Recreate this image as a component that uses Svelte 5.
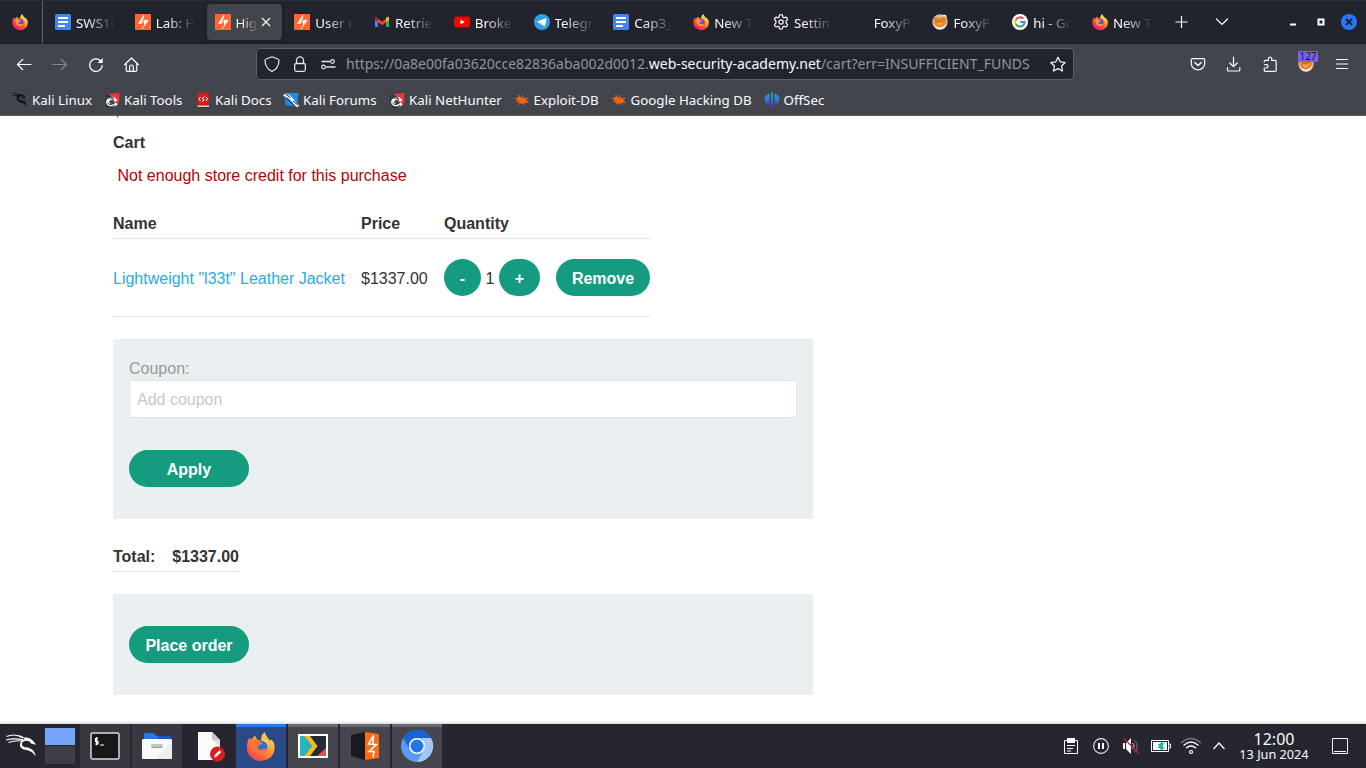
<script>
  const tabs = [
    { icon: 'docs', title: 'SWS10' },
    { icon: 'burp', title: 'Lab: H' },
    { icon: 'burp', title: 'High', active: true },
    { icon: 'burp', title: 'User r' },
    { icon: 'gmail', title: 'Retrie' },
    { icon: 'youtube', title: 'Broke' },
    { icon: 'telegram', title: 'Telegr' },
    { icon: 'docs', title: 'Cap3_' },
    { icon: 'firefox', title: 'New T' },
    { icon: 'gear', title: 'Settin' },
    { icon: 'none', title: 'FoxyP' },
    { icon: 'foxy', title: 'FoxyP' },
    { icon: 'google', title: 'hi - Go' },
    { icon: 'firefox', title: 'New T' }
  ];
  const bookmarks = [
    { icon: 'kali', title: 'Kali Linux', w: 92 },
    { icon: 'tools', title: 'Kali Tools', w: 91 },
    { icon: 'book', title: 'Kali Docs', w: 88 },
    { icon: 'forums', title: 'Kali Forums', w: 106 },
    { icon: 'tools', title: 'Kali NetHunter', w: 124.5 },
    { icon: 'bug', title: 'Exploit-DB', w: 97 },
    { icon: 'bug', title: 'Google Hacking DB', w: 153 },
    { icon: 'offsec', title: 'OffSec', w: 80 }
  ];
  const tasks = [
    { icon: 'terminal', kind: 'pinned' },
    { icon: 'files', kind: 'pinned' },
    { icon: 'editor', kind: 'plain' },
    { icon: 'firefoxBig', kind: 'focused' },
    { icon: 'arrowApp', kind: 'open' },
    { icon: 'burpBig', kind: 'open' },
    { icon: 'chromium', kind: 'open' }
  ];
  const tray = ['clipboard', 'pause', 'volume', 'battery', 'wifi', 'up'];
</script>

{#snippet glyph(name, size = 16)}
  <svg class="glyph" width={size} height={size} viewBox="0 0 {size > 20 ? 32 : 16} {size > 20 ? 32 : 16}" fill="none" aria-hidden="true">
    {#if name === 'firefox'}
      <defs>
        <linearGradient id="ffs" x1="13" y1="1" x2="3" y2="15" gradientUnits="userSpaceOnUse"><stop stop-color="#fff44f" /><stop offset=".35" stop-color="#ffa52a" /><stop offset=".65" stop-color="#ff4a3e" /><stop offset="1" stop-color="#ee1b70" /></linearGradient>
      </defs>
      <path d="M2 3.5 2.6 5 4.6 3.3 5 2.5 6.1 4.3 8 4.8C8 2.6 9.2 1 10.4.1c.1 1.7 1.3 2.4 2.6 3.8l.4-.2c1.6 1.3 2.5 3.1 2.5 5A7.7 7.3 0 0 1 .3 8.8C.2 6.6 1 4.8 2 3.5z" fill="url(#ffs)" />
      <circle cx="8" cy="8.5" r="3.7" fill="#7543e5" />
      <path d="M3.5 5.7c1.6-.7 3.1-.5 4.3.1l1.4 1.3-2.2.8c-1 .4-.8 2 .7 2.2 1.7.3 2.700-.8 3.800-.3-1 2.200-3 3-4.900 2.300-2-.7-3.700-3.800-3.100-6.400z" fill="#ff9a2a" />
    {:else if name === 'docs'}
      <rect width="16" height="16" rx="1.5" fill="#4285f4" />
      <path d="M3 4h10M3 8h10M3 12h7" stroke="#fff" stroke-width="2" />
    {:else if name === 'burp'}
      <rect width="16" height="16" fill="#ff6633" />
      <path d="M9 1v5.200h4.200L7 15V9.800H2.800z" fill="#fff" />
      <path d="M9 3.500V8H6.800zM7 8h2v4L7 15z" fill="#ff6633" />
      <path d="M9 1 5.500 8H9V6.200h4.200L7 15" fill="none" stroke="#fff" stroke-width=".7" />
    {:else if name === 'gmail'}
      <path d="M1 3.500V13h3V6z" fill="#4285f4" /><path d="M12 6v7h3V3.500z" fill="#34a853" />
      <path d="M1 3.700v2.200l3 2.400V4.800L2.800 3.200z" fill="#c5221f" /><path d="m4 4.700 4 3 4-3v3.600l-4 3-4-3z" fill="#ea4335" />
      <path d="M12 4.800v3.500l3-2.400V4.200c0-1.500-1.500-1.900-2.400-1z" fill="#fbbc04" />
    {:else if name === 'youtube'}
      <rect y="2.500" width="16" height="11" rx="3" fill="#f00" /><path d="m6.400 5.500 4.300 2.500-4.300 2.500z" fill="#fff" />
    {:else if name === 'telegram'}
      <circle cx="8" cy="8" r="8" fill="#329fe3" /><path d="m2.900 7.800 8.900-3.600c.6-.2.800.1.700.7L11 11.700c-.1.500-.5.600-.9.400L5.700 9.200z" fill="#fff" /><path d="m6.200 9.100 4.200-3.500-3.200 4-.3 1.800z" fill="#b5d9ee" />
    {:else if name === 'gear'}
      <path d="M6.500 1.100Q8 .2 9.500 1.100l.3 1.900 1.300.8 1.800-.7q1.400.5 1.700 2.300l-1.500 1.500v2.200l1.500 1.500q-.4 1.800-1.900 2.400l-1.700-.8-1.300.8-.2 1.800q-1.500.8-3 0l-.3-1.800-1.300-.8-1.700.8Q1.700 12.500 1.400 10.600l1.500-1.500V6.900L1.400 5.400Q1.700 3.600 3.200 3.100l1.700.7L6.200 3z" stroke="#fbfbfe" stroke-width="1.200" stroke-linejoin="round" />
      <circle cx="8" cy="8" r="2.200" stroke="#fbfbfe" stroke-width="1.200" />
    {:else if name === 'foxy'}
      <circle cx="8" cy="8" r="7.700" fill="#d9b896" /><path d="M2 4 4.500 3l3 1.200L13.500 2l.6 4.500c0 4-2.600 6.700-6.600 6.700C3.700 13 1.500 10 2 4z" fill="#ef8322" />
      <path d="M9.500 1 14 .8l1.200 5-1.700-2.600zM1 9.500l3 3 3.500 1.300 4-1.300 3-3-1.700 4-3.800 2-4.200-.6z" fill="#f3eee7" /><path d="M4 6.500 7 8l4.500-2.500M6 10.500l3.500-.8" stroke="#a45d28" stroke-width=".9" /><path d="m5 8 3 1.300L11 8l-2 3.300H6z" fill="#f9ae55" />
    {:else if name === 'google'}
      <circle cx="8" cy="8" r="8" fill="#fff" />
      <path d="M11.300 4.700A4.700 4.700 0 0 0 3.900 5.700" stroke="#ea4335" stroke-width="2" /><path d="M3.900 5.600a4.700 4.700 0 0 0 0 4.800" stroke="#fbbc05" stroke-width="2" /><path d="M3.900 10.300a4.700 4.700 0 0 0 7.300 1" stroke="#34a853" stroke-width="2" /><path d="M8.200 8h4.400c0 1.500-.5 2.600-1.500 3.500" stroke="#4285f4" stroke-width="2" />
    {:else if name === 'close'}
      <path d="m4 4 8 8M12 4l-8 8" stroke="#fbfbfe" stroke-width="1.100" />
    {:else if name === 'plus'}
      <path d="M7.500 2v12M1.500 8h12" stroke="#fbfbfe" stroke-width="1.200" />
    {:else if name === 'chevron'}
      <path d="m2.500 5 5.500 5.500L13.500 5" stroke="#fbfbfe" stroke-width="1.200" stroke-linecap="round" />
    {:else if name === 'min'}
      <path d="M5 10.500h6" stroke="#fff" stroke-width="2" />
    {:else if name === 'max'}
      <path d="M5.500 5.500h5v5h-5z" stroke="#fff" stroke-width="2" />
    {:else if name === 'winclose'}
      <circle cx="8" cy="8" r="8" fill="#2777ff" /><path d="m5 5 6 6m0-6-6 6" stroke="#20232c" stroke-width="2" />
    {:else if name === 'back'}
      <path d="M15 8.500H1.500m5.300-5.200L1.500 8.500l5.300 5.200" stroke="#fbfbfe" stroke-width="1.200" stroke-linecap="round" stroke-linejoin="round" />
    {:else if name === 'forward'}
      <path d="M1 8.500h13.500M9.200 3.300l5.300 5.200-5.300 5.200" stroke="#85868c" stroke-width="1.200" stroke-linecap="round" stroke-linejoin="round" />
    {:else if name === 'reload'}
      <path d="M14.200 9.700A6.300 6.300 0 1 1 12.700 5" stroke="#fbfbfe" stroke-width="1.300" stroke-linecap="round" /><path d="M14.700 2v5H9.700z" fill="#fbfbfe" />
    {:else if name === 'home'}
      <path d="m.500 8.700 7-6.700 7 6.700M2.200 7.500v6.700c0 .7.500 1.200 1.200 1.200h8.200c.7 0 1.200-.5 1.200-1.200V7.500M5.700 15.200v-4.500c0-1 .6-1.700 1.800-1.700s1.800.7 1.800 1.700v4.500" stroke="#fbfbfe" stroke-width="1.200" stroke-linecap="round" stroke-linejoin="round" />
    {:else if name === 'shield'}
      <path d="M8 .800 14 3c.7.200 1 .700 1 1.300-.1 4.700-1.700 8.900-7 11.100C2.700 13.200 1.100 9 1 4.300c0-.6.300-1.100 1-1.300z" stroke="#e3e3e8" stroke-width="1.200" stroke-linejoin="round" />
    {:else if name === 'lock'}
      <path d="M4.500 7.500V4.400a3.500 3.500 0 0 1 7 0v3.100" stroke="#e3e3e8" stroke-width="1.300" /><rect x="2.700" y="7.500" width="10.600" height="7.800" rx="1.500" stroke="#e3e3e8" stroke-width="1.300" />
    {:else if name === 'perm'}
      <path d="M2 5.500h8M6.500 11H15" stroke="#e3e3e8" stroke-width="1.400" stroke-linecap="round" /><circle cx="12.500" cy="5.500" r="1.800" stroke="#e3e3e8" stroke-width="1.200" /><circle cx="3.500" cy="11" r="1.800" stroke="#e3e3e8" stroke-width="1.200" />
    {:else if name === 'star'}
      <path d="m8 1.200 2.200 4.600 5 .7-3.600 3.500.9 5L8 12.600 3.500 15l.9-5L.800 6.500l5-.7z" stroke="#fbfbfe" stroke-width="1.200" stroke-linejoin="round" />
    {:else if name === 'pocket'}
      <path d="M2.500 2.600h11c.700 0 1.200.500 1.200 1.200v3.700a6.700 6.300 0 0 1-13.400 0V3.800c0-.7.500-1.200 1.200-1.200z" stroke="#fbfbfe" stroke-width="1.200" /><path d="M4.800 6.500 8 9.600l3.200-3.100" stroke="#fbfbfe" stroke-width="1.400" stroke-linecap="round" stroke-linejoin="round" />
    {:else if name === 'download'}
      <path d="M7.500 1v9.500M3.800 7l3.700 3.600L11.200 7M1.500 11.500V14c0 .6.400 1 1 1h10.300c.6 0 1-.4 1-1v-2.500" stroke="#fbfbfe" stroke-width="1.200" stroke-linecap="round" stroke-linejoin="round" />
    {:else if name === 'puzzle'}
      <path d="M2.200 6.200V5.400c0-.7.500-1 1.100-1h3.100V2.900c0-2.300 3.300-2.300 3.300 0v1.500h3.500c.7 0 1 .4 1 1v8.900c0 .7-.3 1-1 1H3.300c-.7 0-1.100-.4-1.100-1V12h2.200c2.200 0 2.200-3.400 0-3.400H2.200" stroke="#fbfbfe" stroke-width="1.200" stroke-linejoin="round" />
    {:else if name === 'menu'}
      <path d="M2 3.500h12M2 8h12M2 12.500h12" stroke="#fbfbfe" stroke-width="1.100" />
    {:else if name === 'kali'}
      <path d="M.5 1.200c2.800 0 5 .5 6.800 1.300M.5 3.700c2.500-.5 4.700-.2 6.500.5M3 6.500c1-.8 2.500-1 4-.7" stroke="#101216" stroke-width=".9" /><path d="M6 2.500c3-.8 5-.2 7 1.800l1 1.200-2.200-.3L9.500 4C6.800 4 6 5 6.700 6.700 8.300 8.300 11 8 12.700 9.500c1.500 1.300 2 3 2.200 5.500-1-2.300-2.500-3.300-4.600-4-3-.7-5-1.600-5.400-3.800C4.500 5.500 5 3.500 6 2.500z" fill="#101216" /><path d="M7 4.500c2 1 5 1 6.500 3.200" stroke="#101216" />
    {:else if name === 'tools'}
      <path d="M5 2 15.300 1v9.500l-3 3z" fill="#f3353a" /><path d="M12.300 9.200C10.800 7 8.800 6 6.700 6.500 3 7.500 2.700 11 5.500 12.700c2.600 1.500 5.500.5 7.300-1.200" stroke="#f5f5f5" stroke-width="3" /><path d="M1.500 4c3-.3 5.500.4 8 2.400M1 9.500c1.500-4 5.500-5 9-1.500M1.500 13.700c3.300 2.300 7.500 1.500 9.500-.7M3.700 10.700C5 13 7.500 13 9.500 11.500" stroke="#17191e" stroke-width=".9" />
    {:else if name === 'book'}
      <path d="M2.500 1 14 .5V13H2.500z" fill="#da1919" /><path d="M2 1v13h12v2H1.800z" fill="#7d1115" /><path d="M2.500 13.500H14v1.500H2.500z" fill="#d7d6d6" /><path d="M5.500 5 3.800 7l1.700 2M11 5l1.700 2L11 9M9.500 4.500 7 6.700l2.300 1L7 10" stroke="#fff" />
    {:else if name === 'forums'}
      <path d="M1 1h14.500L14 14.500 2.500 13z" fill="#238af0" /><path d="M.8 2.500c4 1 6.700 2.800 8.500 5.500s3.500 4.500 6 6.200" stroke="#fff" stroke-width="3" /><path d="m1 1 6.500 4.500M3 6.500l8 6.500M10 9l5 4" stroke="#14202c" />
    {:else if name === 'bug'}
      <path d="M3 5.500c1.700-1.300 3.700-.8 5 .2 2.700-.3 5 1.500 5.300 3.500-.5 2-4 2.800-6.800 2C4.500 10.500 2.300 8 3 5.500z" fill="#ef6511" /><path d="M.5 6.800 4 7M4.500 3 7 6.500M8.500 3l.8 3.500M2 10l3.500-1M4.500 12.500 7 10.500M9.500 13l-.5-2.500M11.500 6.300l2.700.2M12.500 9.500l2 1.500" stroke="#ef6511" stroke-width="1.100" />
    {:else if name === 'offsec'}
      <defs><linearGradient id="os" x1="0" x2="0" y1="0" y2="1"><stop stop-color="#1fa2bf" /><stop offset=".5" stop-color="#347bd5" /><stop offset="1" stop-color="#5927b8" /></linearGradient></defs>
      <path d="M5.500 1.200v12.600C-1.300 10.500-1.200 4.300 5.500 1.200zM10.500 1.200v12.600c6.800-3.300 6.700-9.500 0-12.600z" fill="url(#os)" /><path d="M7 .5h2v15H7z" fill="url(#os)" />
    {:else if name === 'terminal'}
      <rect x="2" y="3" width="28" height="26" rx="1.500" fill="#171819" stroke="#d8d8d8" stroke-width="1.500" />
      <path d="M9 8.500H6.500v2.800H9V14H6M7.700 7v8.300M11 15h4" stroke="#fff" stroke-width="1.200" />
    {:else if name === 'files'}
      <path d="M3 4.500C3 3.500 4 3 5 3h7c1.700 0 2.500 3 4 3h12c1 0 1.500.5 1.500 1.500V14H3z" fill="#2d73ed" /><path d="M16.500 6H28c1 0 1.500.5 1.500 1.500V10H18z" fill="#1a55c7" /><path d="M1 10.500C1 9.500 1.500 9 2.500 9h27c1 0 1.500.5 1.500 1.500v17c0 1-.5 1.500-1.500 1.500h-27C1.500 29 1 28.500 1 27.500z" fill="#fafafa" /><path d="m31 12-16 17h14.500c1 0 1.500-.5 1.500-1.500z" fill="#ededed" /><rect x="10" y="14" width="12" height="4" rx="1.500" fill="#c5c5c5" /><path d="M11 17.500h10" stroke="#999" />
    {:else if name === 'editor'}
      <path d="M5 2h14l8 8v20H5z" fill="#fbfbfb" /><path d="M19 2v8h8z" fill="#c9c9ca" /><path d="m20 10 7 7v-7z" fill="#e0e0e1" /><circle cx="24.500" cy="24" r="7.500" fill="#d61e20" /><path d="m21 27.500.7-2.500 4.800-4.800 1.800 1.800-4.800 4.800z" fill="#fff" />
    {:else if name === 'firefoxBig'}
      <defs><linearGradient id="ffb" x1="27" y1="3" x2="6" y2="29" gradientUnits="userSpaceOnUse"><stop stop-color="#ffe565" /><stop offset=".35" stop-color="#ffad38" /><stop offset=".72" stop-color="#ff663a" /><stop offset="1" stop-color="#e44452" /></linearGradient></defs>
      <path d="M4.500 7.500 5.300 10 8 7.500l2-2.200 2 4.200 4 1.200C16.200 6 17.300 3.800 20 2c.2 3.700 2.800 5.800 5 8.500l1.600-.8c3 3 3.300 6 2.800 10A13.500 12.500 0 0 1 2 17c-.1-3.800.8-6.800 2.500-9.500z" fill="url(#ffb)" /><circle cx="16" cy="17" r="6.500" fill="#2973dd" /><path d="M5 10.500c3.700-1.600 6-.9 8.300-.3l4 2.800c-.9 2.300-5.500 2.200-4.800 4.500.5 1.800 3.600 3 6 1.500 1.300-.8 3-.7 3.500 0-1.500 3.700-5.500 5.700-9.700 4.300C7.500 21.800 3.500 16.500 5 10.500z" fill="#f9763a" /><path d="M16 10.500c5.300.5 8 3.500 7.200 8.500C25 14 23 10 19 8z" fill="#ffd15d" />
    {:else if name === 'arrowApp'}
      <rect x="2" y="5" width="28" height="22" fill="#252b36" stroke="#fff" stroke-width="2" /><path d="M3 6h4l8 10-8 10H3z" fill="#21b8c1" /><path d="M7 6h6l7.500 10L13 26H7l8-10z" fill="#f5ba2b" /><path d="m29 18-9 8h9z" fill="#f04949" />
    {:else if name === 'burpBig'}
      <path d="M2 5 16 2v28L2 26z" fill="#181a1f" /><path d="M16 2 30 4v24l-14 2z" fill="#ff6b0e" /><path d="M24.500 5.500 19.500 14l8 .5-7.500 7h5L24 27.500M24.500 5.500 24 14" stroke="#fff" stroke-width="1.600" />
    {:else if name === 'chromium'}
      <circle cx="16" cy="16" r="16" fill="#5b9af3" /><path d="M2 8a16 16 0 0 1 28 0H16a8 8 0 0 0-7.500 11z" fill="#1764d0" /><path d="M30 8a16 16 0 0 1-14 24l7-12c2-4 0-9-3-12z" fill="#a7c6f8" /><circle cx="16" cy="16" r="8" fill="#fff" /><circle cx="16" cy="16" r="6.500" fill="#2376e9" />
    {:else if name === 'clipboard'}
      <path d="M1.500 2.500h13v13h-13z" stroke="#fff" /><path d="M4 0h8v5H4z" fill="#fff" /><path d="M4 7.500h8M4 10.500h6M4 13h4" stroke="#fff" />
    {:else if name === 'pause'}
      <circle cx="8" cy="8" r="7.400" stroke="#e8e8ea" stroke-width="1.100" /><path d="M6 5v6M10 5v6" stroke="#fff" stroke-width="2" />
    {:else if name === 'volume'}
      <path d="M0 5h2v6H0zM3 5l5-5v16l-5-5z" fill="#fff" /><path d="M9.500 5c2 1.800 2 4.200 0 6" stroke="#ddd" /><path d="M11 2c4 2.500 4 9.500 0 12" stroke="#777980" /><path d="m1 .5 15 15" stroke="#d41b25" stroke-width="1.200" />
    {:else if name === 'up'}
      <path d="m2.500 11 5.500-6 5.500 6" stroke="#fff" stroke-width="1.200" />
    {/if}
  </svg>
{/snippet}

<div class="screen">
  <header class="tabstrip">
    <div class="pinned">{@render glyph('firefox')}</div>
    <div class="tabs">
      {#each tabs as tab}
        <div class="tab" class:active={tab.active}>
          {@render glyph(tab.icon)}
          <span class="title">{tab.title}</span>
          {#if tab.active}{@render glyph('close')}{/if}
        </div>
      {/each}
    </div>
    <div class="strip-actions">{@render glyph('plus')}{@render glyph('chevron')}</div>
    <div class="window-actions">{@render glyph('min')}{@render glyph('max')}{@render glyph('winclose')}</div>
  </header>

  <nav class="toolbar">
    <div class="tools">
      {#each ['back', 'forward', 'reload', 'home'] as name}<span class="tool">{@render glyph(name)}</span>{/each}
    </div>
    <div class="urlbar">
      {@render glyph('shield')}{@render glyph('lock')}{@render glyph('perm')}
      <span class="url">https://0a8e00fa03620cce82836aba002d0012.<b>web-security-academy.net</b>/cart?err=INSUFFICIENT_FUNDS</span>
      {@render glyph('star')}
    </div>
    <div class="tools">
      {#each ['pocket', 'download', 'puzzle', 'foxy', 'menu'] as name}
        <span class="tool">{@render glyph(name)}{#if name === 'foxy'}<span class="badge">127</span>{/if}</span>
      {/each}
    </div>
  </nav>

  <div class="bookmarks">
    {#each bookmarks as mark}
      <span class="bookmark" style:width="{mark.w}px">{@render glyph(mark.icon)}<span>{mark.title}</span></span>
    {/each}
  </div>

  <main>
    <div class="credit">$</div>
    <h4>Cart</h4>
    <p class="warning">Not enough store credit for this purchase</p>
    <div class="cart">
      <div class="row head"><span>Name</span><span>Price</span><span>Quantity</span></div>
      <div class="row item">
        <a href="#jacket">Lightweight "l33t" Leather Jacket</a>
        <span class="price">$1337.00</span>
        <span class="qty"><button class="minus">-</button><span class="count">1</span><button class="more">+</button></span>
        <button class="remove">Remove</button>
      </div>
    </div>
    <section class="coupon">
      <label for="coupon">Coupon:</label>
      <input id="coupon" placeholder="Add coupon" />
      <button class="wide">Apply</button>
    </section>
    <div class="total"><span>Total:</span><span>$1337.00</span></div>
    <section class="order"><button class="wide">Place order</button></section>
  </main>

  <footer>
    <svg class="dragon" width="32" height="26" viewBox="0 0 32 26" fill="none">
      <path d="M.5 3.500C6 1 11 1.200 17 5M0 7c5-1.400 11-1.400 17-.3M2.500 9.500C8 7.500 13 7.500 16 8" stroke="#fff" stroke-width="1.100" />
      <path d="M11 2c3 0 5 1 7 2.500 4-.5 7 .8 10 4.200l2 3-4.500-1-2-2.200C20 7 16.500 8 16 10.500c-.5 2.500 1.500 3.500 4 3.800 5 .7 9 3.200 9.500 9.200-2.500-4.500-6-6-10.500-6.700-4-.6-6-3.800-4.500-7C15.300 7.500 17 6.500 19 6l-8-4z" fill="#fff" />
    </svg>
    <div class="pager"><i></i><i></i></div>
    <div class="tasks">
      {#each tasks as task}<div class="task {task.kind}">{@render glyph(task.icon, 32)}</div>{/each}
    </div>
    <div class="tray">
      {#each tray as name}
        {#if name === 'battery'}
          <svg width="20" height="16" viewBox="0 0 20 16" fill="none"><path d="M.5 2.500h17v11H.5zM18 6h1.500v4H18" stroke="#fff" /><path d="M2 4h14v8H2z" fill="#fff" /><path d="M12 4v8c-2 0-3-1-3.500-2H7V9h1V7H7V6h1.500C9 5 10 4 12 4zM12 5.500h2v1h-2zM12 9.500h2v1h-2z" fill="#1abc9c" /></svg>
        {:else if name === 'wifi'}
          <svg width="22" height="18" viewBox="0 0 22 18" fill="none"><path d="M1 6Q11-3 21 6" stroke="#777980" stroke-width="1.200" /><path d="M3.500 8.500q7.500-7 15 0M6 11.300q5-4.600 10 0" stroke="#fff" stroke-width="1.200" /><circle cx="11" cy="15" r="1.500" stroke="#fff" stroke-width="1.200" /></svg>
        {:else}
          {@render glyph(name)}
        {/if}
      {/each}
    </div>
    <div class="clock"><span class="time">12:00</span><span class="date">13 Jun 2024</span></div>
    <svg class="desktop" width="16" height="16" viewBox="0 0 16 16" fill="none"><path d="M.5.5h15v15H.5zM2 13.500h12" stroke="#f4f4f4" /></svg>
  </footer>
</div>

<style>
  :global(body) { margin: 0; overflow: hidden; }
  .screen, .screen * { box-sizing: border-box; }
  .screen { width: 1366px; height: 768px; display: flex; flex-direction: column; overflow: hidden; background: #fff; font-family: "Noto Sans", sans-serif; color: #fbfbfe; }
  .glyph { flex: none; display: block; overflow: visible; }
  .tabstrip { height: 44px; flex: none; display: flex; align-items: center; background: #22242d; border-top: 1px solid #2b2d43; border-bottom: 1px solid #17181f; }
  .pinned { width: 43px; height: 43px; padding: 13px 0 0 12px; border-right: 1px solid #606168; }
  .tabs { display: grid; grid-template-columns: repeat(14, 79.77px); padding-left: 4px; }
  .tab { height: 36px; display: flex; align-items: center; gap: 5px; padding-left: 8px; margin-right: 4.5px; overflow: hidden; }
  .tab.active { background: #43454c; border-radius: 4px; gap: 0; box-shadow: 0 0 3px #15161c; }
  .title { font-size: 13.33px; line-height: 20px; width: 39px; overflow: hidden; white-space: nowrap; padding-top: 1px; mask-image: linear-gradient(to right, #000 25%, transparent); }
  .active .title { width: 22px; margin-left: 5px; }
  .strip-actions { display: flex; gap: 24.5px; margin-left: 10px; }
  .window-actions { display: flex; gap: 12px; margin-left: 55px; }
  .toolbar { height: 40px; flex: none; display: flex; align-items: center; justify-content: space-between; padding: 0 6px; background: #43454c; }
  .tools { display: flex; }
  .tool { width: 36px; height: 32px; display: flex; align-items: center; justify-content: center; position: relative; }
  .badge { position: absolute; left: 10px; top: 3px; width: 20px; height: 11px; font-size: 10px; line-height: 11px; text-align: center; background: #7b61e8; color: #15141a; border-radius: 1px; }
  .urlbar { width: 818px; height: 32px; display: flex; align-items: center; gap: 12px; padding: 0 7px; background: #22242d; border: 1px solid #5d5e65; border-radius: 4px; }
  .url { flex: 1; font-size: 14px; line-height: 20px; color: #939499; white-space: nowrap; margin-left: -2px; }
  .url b { font-weight: 400; color: #fbfbfe; }
  .bookmarks { height: 32px; flex: none; display: flex; padding: 0 0 0 12px; background: #43454c; border-bottom: 1px solid #5d5e65; }
  .bookmark { display: flex; align-items: center; gap: 4px; font-size: 13.33px; white-space: nowrap; flex: none; }
  main { height: 608px; flex: none; overflow: hidden; padding-left: 113px; font: 16px/24px "Liberation Sans", Arial, sans-serif; color: #333332; }
  .credit { margin-top: -17px; height: 24px; }
  h4 { font-size: 16px; line-height: 24px; margin: 8px 0 0; }
  .warning { color: #b00505; margin: 9px 0 0 4.5px; }
  .cart { width: 537px; margin-top: 20px; }
  .row { display: grid; grid-template-columns: 248px 83px 112px 94px; align-items: center; border-bottom: 1px solid #e3e3e3; white-space: nowrap; }
  .head { height: 31px; padding-top: 2px; font-weight: 700; }
  .item { height: 78px; }
  .item a, .price, .count { padding-top: 2px; }
  a { color: #29abe2; text-decoration: none; }
  button { font: 700 16px/24px "Liberation Sans", Arial, sans-serif; height: 37px; padding: 2px 0 0; border: 0; border-radius: 18.5px; background: #159b80; color: #fff; }
  .qty { display: flex; align-items: center; }
  .minus { width: 37px; } .more { width: 41px; } .remove { width: 94px; } .wide { width: 120px; }
  .count { width: 18px; text-align: center; }
  section { width: 700px; background: #eaeff2; padding: 0 16px; }
  .coupon { height: 180px; margin-top: 22px; padding-top: 18px; }
  label { display: block; color: #999; height: 23px; }
  input { display: block; width: 668px; height: 38px; padding: 2px 7px 0; font: 16px "Liberation Sans", Arial, sans-serif; border: 1px solid #e3e3e3; background: #fff; margin-bottom: 32px; }
  input::placeholder { color: #c8c8c8; opacity: 1; }
  .total { width: 126px; height: 30px; margin-top: 23px; padding-top: 3px; display: flex; justify-content: space-between; font-weight: 700; border-bottom: 1px solid #e3e3e3; white-space: nowrap; }
  .order { height: 101px; margin-top: 22px; padding-top: 32px; }
  footer { height: 44px; flex: none; display: flex; align-items: center; background: #25262f; padding-left: 6px; box-shadow: 0 -1px 3px #0003; z-index: 1; }
  .pager { width: 30px; display: grid; grid-template-rows: 17px 18px; gap: 1px; margin-left: 7px; }
  .pager i { background: #3c3d45; } .pager i:first-child { background: #75a4f8; }
  .tasks { display: flex; gap: 2px; margin-left: 5px; }
  .task { width: 50px; height: 44px; display: flex; align-items: center; justify-content: center; }
  .task.pinned { background: #373840; padding: 0; border: 0; }
  .task.open { background: #44454d; box-shadow: inset 0 3px #696a72; }
  .task.focused { background: #294a86; box-shadow: inset 0 3px #2777ff; }
  .tray { display: flex; align-items: center; width: 170px; margin-left: 621px; gap: 14px; }
  .tray > svg:nth-child(4) { margin-left: -2px; }
  .tray > svg:nth-child(5) { margin-left: -5px; }
  .tray > svg:nth-child(6) { margin-left: -5px; }
  .clock { width: 80px; display: flex; flex-direction: column; align-items: center; white-space: nowrap; margin-left: 1px; padding-top: 2px; }
  .time { font-size: 16px; line-height: 15px; } .date { font-size: 12.7px; line-height: 15px; }
  .desktop { margin-left: 18px; }
</style>
